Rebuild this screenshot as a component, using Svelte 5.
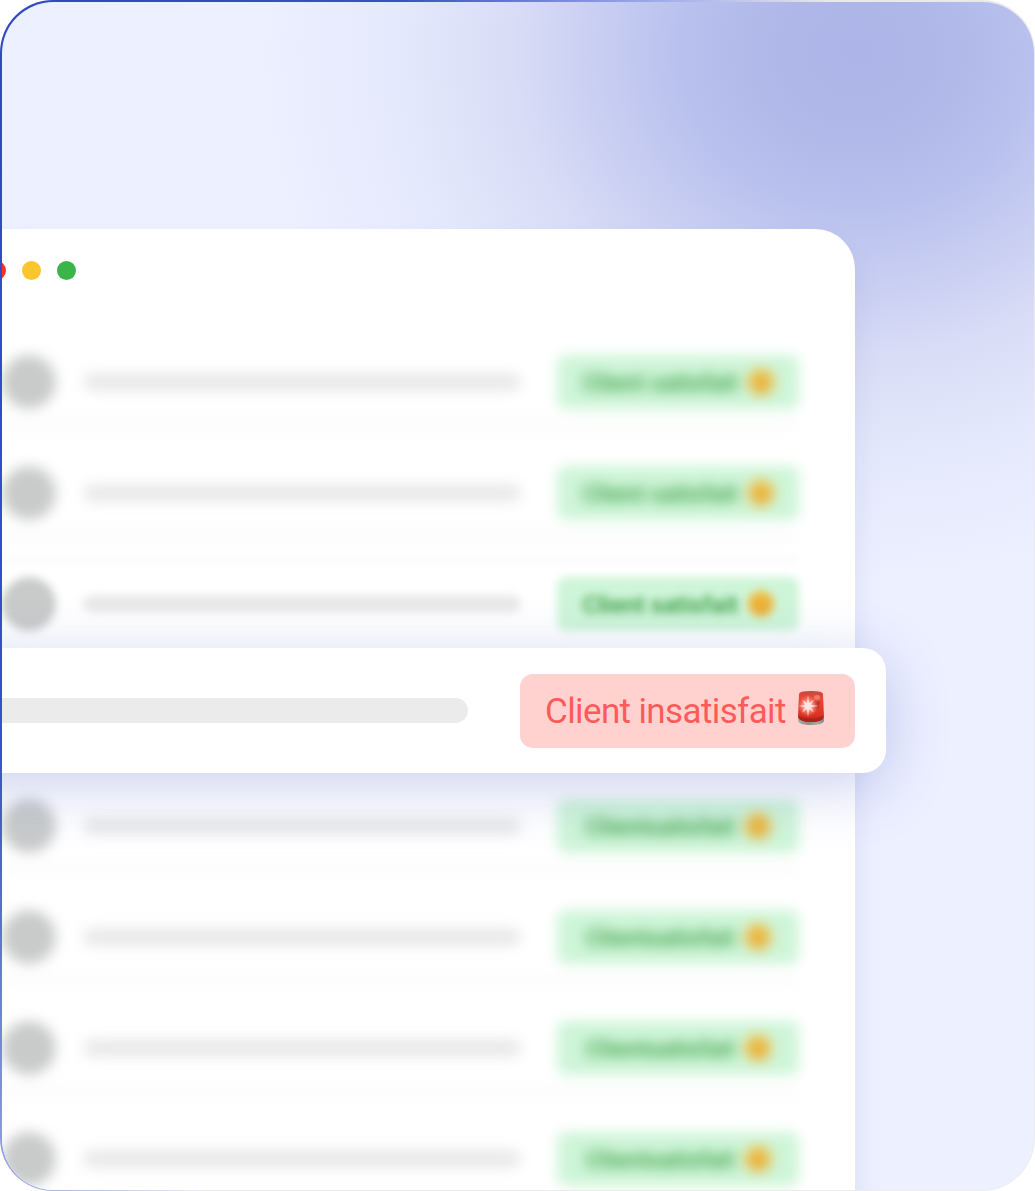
<script lang="ts">
  type Row = {
    blur: number; // Blur radius in pixels
    tight?: boolean;
    lineTop?: boolean;
    lineBottom?: boolean;
  };

  const rowsBefore: Row[] = [
    { blur: 6.5, lineBottom: true },
    { blur: 6.5, lineBottom: true },
    { blur: 4.2, lineTop: true },
  ];

  const rowsAfter: Row[] = [
    { blur: 6.5, tight: true, lineBottom: true },
    { blur: 6.5, tight: true, lineBottom: true },
    { blur: 6.5, tight: true, lineBottom: true },
    { blur: 6.5, tight: true },
  ];
</script>

{#snippet clientRow(row: Row)}
  <div
    class="row"
    class:tight={row.tight}
    class:line-top={row.lineTop}
    class:line-bottom={row.lineBottom}
    style="--blur: {row.blur}px"
  >
    <div class="avatar"></div>
    <div class="bar"></div>
    <div class="badge ok">
      <span>Client satisfait</span>
      <svg class="smiley" viewBox="0 0 28 28">
        <circle cx="14" cy="14" r="14" fill="#f3bb3c" />
        <path d="M7 12q2-3 4 0M17 12q2-3 4 0" fill="none" stroke="#c18a35" stroke-width="2" />
        <path d="M7 17q7 8 14 0" fill="none" stroke="#c18a35" stroke-width="2" />
      </svg>
    </div>
  </div>
{/snippet}

<div class="frame">
  <div class="scene">
    <div class="window">
      <div class="dots">
        <span class="dot red"></span>
        <span class="dot yellow"></span>
        <span class="dot green"></span>
      </div>

      {#each rowsBefore as row}
        {@render clientRow(row)}
      {/each}

      <!-- Highlighted client -->
      <div class="highlight">
        <div class="highlight-bar"></div>
        <div class="badge alert">
          <span>Client insatisfait</span>
          <svg class="siren" viewBox="0 0 28 36">
            <defs>
              <linearGradient id="glass" x1="0" y1="0" x2="0" y2="1">
                <stop offset="0" stop-color="#d04038" />
                <stop offset="0.2" stop-color="#e64a3b" />
                <stop offset="0.75" stop-color="#df3322" />
                <stop offset="1" stop-color="#b9241a" />
              </linearGradient>
              <linearGradient id="base" x1="0" y1="0" x2="1" y2="0">
                <stop offset="0" stop-color="#b1aaa7" />
                <stop offset="0.4" stop-color="#8d8b88" />
                <stop offset="0.75" stop-color="#a9a9a7" />
                <stop offset="1" stop-color="#838787" />
              </linearGradient>
              <radialGradient id="flare">
                <stop offset="0" stop-color="#fff" />
                <stop offset="0.35" stop-color="#ffc4ba" stop-opacity="0.9" />
                <stop offset="1" stop-color="#ff796a" stop-opacity="0" />
              </radialGradient>
            </defs>
            <path d="M1 28q13 6 26 0v3q-1 4-13 4t-13-4z" fill="url(#base)" />
            <path d="M2 4q0-3 12-3t12 3l1 23q-2 5-13 5t-13-5z" fill="url(#glass)" />
            <path d="M1.5 26q12 5 25 0v2q-2 4-12.500 4t-12.500-4z" fill="#a9251c" />
            <path d="M3 3.500q11-3 22 0" fill="none" stroke="#b4564a" stroke-width="1" />
            <path d="M15 11l8 1-2 7-5-1z" fill="#a8261d" opacity="0.600" />
            <ellipse cx="20" cy="7.500" rx="3" ry="2.500" fill="#f07a6b" />
            <circle cx="11" cy="16" r="10.500" fill="url(#flare)" />
            <path
              d="M11 5l1 8.500L17 9.500l-3.500 5.500 8 1-8 1 3.500 5.500-5-4L11 27l-1-8.500-5 4 3.500-5.500-7-1 7-1-3.500-5.500 5 4z"
              fill="#ffe9e5"
            />
          </svg>
        </div>
      </div>

      {#each rowsAfter as row}
        {@render clientRow(row)}
      {/each}
    </div>
  </div>
</div>

<style>
  :global(body) {
    background: #fff;
    overflow: hidden;
  }
  .frame {
    box-sizing: border-box;
    width: 1035px;
    height: 1191px;
    padding: 1.5px;
    border-radius: 53px;
    background: linear-gradient(118deg, #3047c3 0%, #3a50c7 24%, #aab4ea 41%, #e9e9ec 50%, #ececec 100%);
  }
  .scene {
    box-sizing: border-box;
    height: 100%;
    padding-top: 227px;
    border-radius: 51.500px;
    overflow: hidden;
    background:
      radial-gradient(
        ellipse 600px 530px at 855px 50px,
        #adb5e8 0%,
        #afb7e9 13%,
        #b8c0ed 29%,
        #c7cdf2 42%,
        #d8dcf6 57%,
        #e4e8fc 75%,
        #edf0ff 100%
      );
  }
  .window {
    width: 853.500px;
    height: 1100px;
    background: #fff;
    border-radius: 0 40px 0 0;
    box-shadow: 0 18px 28px rgba(92, 99, 170, 0.13);
  }
  .dots {
    display: flex;
    gap: 16px;
    height: 66px;
    padding-top: 32px;
    margin-left: -15px;
  }
  .dot {
    width: 19px;
    height: 19px;
    border-radius: 50%;
  }
  .red {
    background: #ff3020;
  }
  .yellow {
    background: #f9c62e;
  }
  .green {
    background: #39b54a;
  }
  .row {
    box-sizing: border-box;
    display: flex;
    align-items: center;
    width: 797px;
    height: 111px;
    filter: blur(var(--blur));
  }
  .line-top {
    background: linear-gradient(#f4f4f4, #f4f4f4) 0 9px / 100% 3px no-repeat;
  }
  .line-bottom {
    background: linear-gradient(#f4f4f4, #f4f4f4) 0 96px / 100% 3px no-repeat;
  }
  .avatar {
    flex: none;
    width: 54px;
    height: 54px;
    border-radius: 50%;
    background: #c9cbca;
  }
  .bar {
    width: 438px;
    height: 18px;
    margin-left: 27px;
    border-radius: 9px;
    background: #e9e9e9;
  }
  .badge {
    box-sizing: border-box;
    display: flex;
    align-items: center;
    font-family: Roboto, sans-serif;
    white-space: nowrap;
  }
  .ok {
    width: 242px;
    height: 54px;
    margin-left: auto;
    padding-left: 26px;
    border-radius: 9px;
    background: #cef5d8;
    color: #339a3c;
    font-size: 24.500px;
    font-weight: 500;
  }
  .ok span {
    width: 154px;
    letter-spacing: -0.2px;
  }
  .smiley {
    width: 26px;
    height: 26px;
    margin-left: 11px;
  }
  .tight .ok {
    padding-left: 29px;
  }
  .tight span {
    width: 148px;
    word-spacing: -6px;
  }
  .tight .smiley {
    margin-left: 11px;
  }
  .highlight {
    position: relative;
    z-index: 1;
    box-sizing: border-box;
    display: flex;
    align-items: center;
    justify-content: space-between;
    width: 984.500px;
    height: 125px;
    margin: -11.500px 0 -2.500px -100px;
    padding-right: 31px;
    border-radius: 23px;
    background: #fff;
    box-shadow: 0 13px 60px rgba(65, 83, 196, 0.28);
  }
  .highlight-bar {
    width: 566px;
    height: 25px;
    border-radius: 0 13px 13px 0;
    background: #ebebeb;
  }
  .alert {
    width: 335px;
    height: 74px;
    padding-left: 25px;
    border-radius: 13px;
    background: #ffd2d0;
    color: #ff5a5a;
    font-size: 35px;
  }
  .alert span {
    width: 241px;
    padding-top: 2px;
    letter-spacing: -0.62px;
  }
  .siren {
    width: 28px;
    height: 36px;
    margin: -6px 0 0 11px;
  }
</style>
